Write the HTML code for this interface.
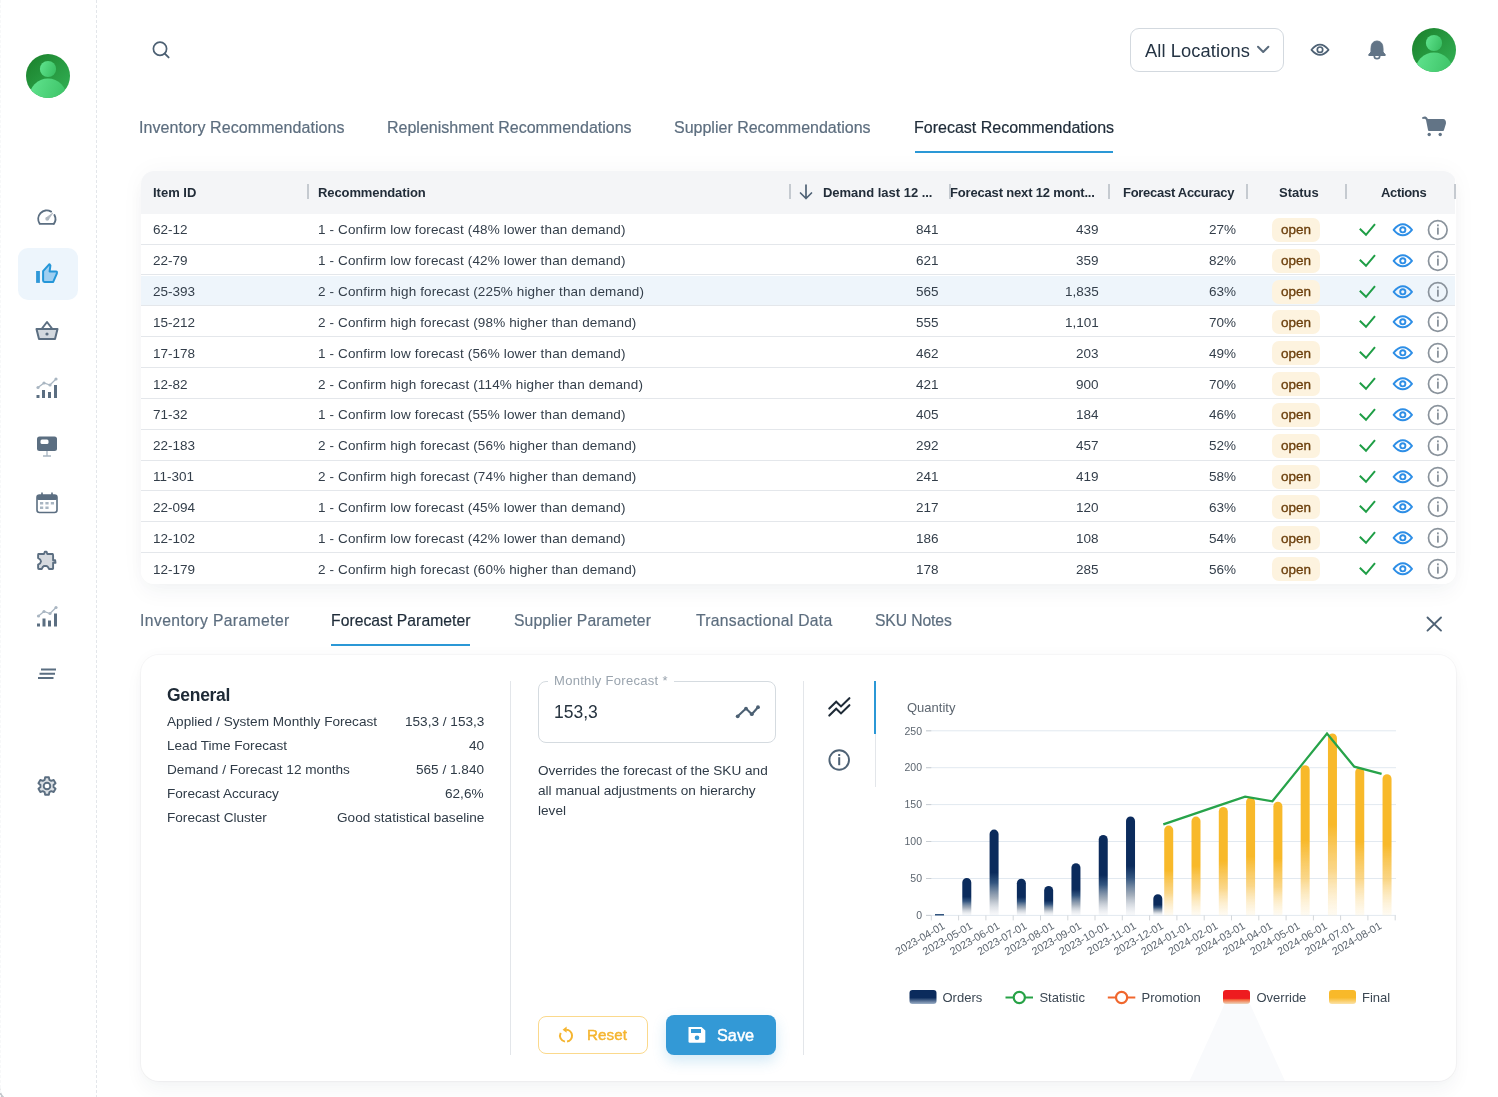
<!DOCTYPE html><html><head><meta charset="utf-8"><style>
*{box-sizing:border-box;margin:0;padding:0}
html,body{width:1498px;height:1097px;overflow:hidden;background:#fff;font-family:"Liberation Sans",sans-serif;color:#2c3946}
.abs{position:absolute}
.t{position:absolute;white-space:nowrap;line-height:1;will-change:transform}
svg{will-change:transform}
</style></head><body>

<svg class="abs" style="left:0;top:1085px" width="8" height="12" viewBox="0 1085 8 12"><path d="M0 1087 Q0.5 1094 4.2 1097 L0 1097 Z" fill="#c4c8cd"/></svg>
<div class="abs" style="left:96px;top:0;width:1px;height:1097px;background:repeating-linear-gradient(to bottom,#e3e6ea 0 3px,transparent 3px 5px)"></div>
<div class="abs" style="left:0;top:0;width:1px;height:1097px;background:repeating-linear-gradient(to bottom,#f7f8f9 0 3px,transparent 3px 5px)"></div>
<svg class="abs" style="left:26px;top:54px" width="44" height="44" viewBox="0 0 44 44">
<defs><clipPath id="avc26"><circle cx="22" cy="22" r="22"/></clipPath>
<linearGradient id="avg26" x1="0" y1="0" x2="1" y2="1"><stop offset="0" stop-color="#1a7f2a"/><stop offset="1" stop-color="#34b457"/></linearGradient>
<linearGradient id="avh26" x1="0" y1="0" x2="1" y2="0.4"><stop offset="0" stop-color="#62e590"/><stop offset="1" stop-color="#3cc266"/></linearGradient></defs>
<g clip-path="url(#avc26)"><rect width="44" height="44" fill="url(#avg26)"/>
<circle cx="22" cy="15" r="8.1" fill="url(#avh26)"/>
<ellipse cx="22" cy="44" rx="19" ry="19.5" fill="url(#avh26)"/></g></svg>
<div class="abs" style="left:18px;top:248px;width:60px;height:52px;border-radius:10px;background:#edf5fc"></div>
<svg class="abs" style="left:0;top:0" width="96" height="820" viewBox="0 0 96 820">
<path d="M53.84 223.9 L39.76 223.9 A8.6 8.6 0 0 1 51.1 211.55 M54.4 214.97 A8.6 8.6 0 0 1 53.84 223.9" fill="none" stroke="#5b6e81" stroke-width="1.9" stroke-linecap="round" stroke-linejoin="round"/>
<path d="M46.2 217.8 L52.8 213 L48.2 219.8 Z" fill="#b0b8c0" stroke="#b0b8c0" stroke-width="0.8" stroke-linejoin="round"/><circle cx="47.2" cy="218.8" r="1.9" fill="#b0b8c0"/>
<g>
<rect x="36.1" y="271" width="3.8" height="11.9" fill="#2f98d8"/>
<path d="M43.1 271.2 L49.4 264.2 L50.4 265.6 L49.6 271.4 L56 271.4 Q57.2 271.5 56.9 273 L56.6 274.2 L53.2 281.9 L44.5 281.9 Q43.1 281.9 43.1 280.5 Z" fill="#9fcff1" stroke="#2496d8" stroke-width="2" stroke-linejoin="round"/>
</g>
<g stroke="#5b6e81" stroke-width="2" fill="none" stroke-linejoin="round">
<path d="M36.5 329 L57.5 329 L55 339 L39 339 Z" fill="#d3d9df"/>
<path d="M42 328.5 L47 322 L52 328.5"/>
</g>
<circle cx="47" cy="334" r="1.6" fill="#5b6e81"/>
<g fill="#5b6e81">
<rect x="36.5" y="395" width="3" height="3"/><rect x="42" y="390" width="3" height="8"/><rect x="48" y="392" width="3" height="6"/><rect x="54" y="385" width="3" height="13"/>
</g>
<path d="M38 387.5 L44 383 L50 385 L56 379" stroke="#a9b6c2" stroke-width="1.3" fill="none"/>
<g fill="#a9b6c2"><circle cx="38" cy="387.5" r="1.6"/><circle cx="44" cy="383" r="1.6"/><circle cx="50" cy="385" r="1.6"/><circle cx="56" cy="379" r="1.6"/></g>
<rect x="37" y="436.5" width="20" height="14.5" rx="2.5" fill="#5b6e81"/>
<rect x="40.5" y="439.5" width="8" height="4.5" rx="1.5" fill="#fff"/>
<path d="M47 451 L47 455.5 M43 456 L51 456" stroke="#a9b6c2" stroke-width="1.3"/>
<rect x="37" y="495" width="20" height="17.5" rx="2.5" fill="#fff" stroke="#5b6e81" stroke-width="1.6"/>
<rect x="37" y="495" width="20" height="5" rx="1.5" fill="#5b6e81"/>
<path d="M42 492.5 L42 496 M52 492.5 L52 496" stroke="#5b6e81" stroke-width="1.6"/>
<g fill="#a9b6c2"><rect x="40" y="502" width="3.2" height="2.5"/><rect x="45.4" y="502" width="3.2" height="2.5"/><rect x="50.8" y="502" width="3.2" height="2.5"/><rect x="40" y="506.5" width="3.2" height="2.5"/><rect x="45.4" y="506.5" width="3.2" height="2.5"/></g>
<path d="M38.3 554 L44 554 L44.9 551.6 L46.5 551.6 L47.3 554 L52.8 554 Q53.1 554.2 53.1 556 L53.1 560.3 L55.2 560.3 L55.5 562.8 L53.1 562.8 L53.1 568.5 Q53.1 569 52.5 569 L49 569 Q47.8 566 46.2 566 L44 566 Q42.6 566.5 41.8 569 L38.9 569 Q38.1 569 38.1 568 L38.1 564.7 Q40.8 563.5 41 561.4 Q40.8 559.2 38.1 558.1 L38.1 555 Q38.1 554 38.3 554 Z" fill="#d6dadf" stroke="#5b6e81" stroke-width="1.9" stroke-linejoin="round"/>
<g fill="#5b6e81">
<rect x="37" y="623.5" width="3" height="3"/><rect x="42.5" y="618.5" width="3" height="8"/><rect x="48" y="620.5" width="3" height="6"/><rect x="54" y="613.5" width="3" height="13"/>
</g>
<path d="M38.5 616 L44 611.5 L50 613.5 L56 607.5" stroke="#a9b6c2" stroke-width="1.3" fill="none"/>
<g fill="#a9b6c2"><circle cx="38.5" cy="616" r="1.6"/><circle cx="44" cy="611.5" r="1.6"/><circle cx="50" cy="613.5" r="1.6"/><circle cx="56" cy="607.5" r="1.6"/></g>
<path d="M41 669.5 L56 669.5 M39.5 673.8 L55 673.8 M38 678 L53.5 678" stroke="#5b6e81" stroke-width="1.9"/>
</svg>
<svg class="abs" style="left:30px;top:770px" width="34" height="32" viewBox="30 770 34 32"><path d="M43.70 780.28 L44.63 779.84 L45.13 777.20 L48.87 777.20 L49.37 779.84 L50.30 780.28 L51.15 780.87 L53.69 779.98 L55.56 783.22 L53.52 784.97 L53.60 786.00 L53.52 787.03 L55.56 788.78 L53.69 792.02 L51.15 791.13 L50.30 791.72 L49.37 792.16 L48.87 794.80 L45.13 794.80 L44.63 792.16 L43.70 791.72 L42.85 791.13 L40.31 792.02 L38.44 788.78 L40.48 787.03 L40.40 786.00 L40.48 784.97 L38.44 783.22 L40.31 779.98 L42.85 780.87 Z" fill="#dde1e5" stroke="#5b6e81" stroke-width="1.9" stroke-linejoin="round"/><circle cx="47" cy="786" r="3.3" fill="#fff" stroke="#5b6e81" stroke-width="1.9"/></svg>
<svg class="abs" style="left:150px;top:38px" width="24" height="24" viewBox="150 38 24 24"><circle cx="160" cy="48.8" r="6.6" fill="none" stroke="#4c6073" stroke-width="1.7"/><path d="M164.8 53.6 L168.6 57.4" stroke="#4c6073" stroke-width="1.9" stroke-linecap="round"/></svg>
<div class="abs" style="left:1130px;top:28px;width:154px;height:44px;border:1px solid #d3d9df;border-radius:9px"></div>
<div class="t" style="left:1145px;top:41.5px;font-size:18.3px;color:#253444;letter-spacing:0.1px">All Locations</div>
<svg class="abs" style="left:1250px;top:38px" width="24" height="24" viewBox="1250 38 24 24"><path d="M1258 46.8 L1263.2 52 L1268.4 46.8" fill="none" stroke="#5a6b7c" stroke-width="2" stroke-linecap="round" stroke-linejoin="round"/></svg>
<svg class="abs" style="left:1305px;top:35px" width="30" height="30" viewBox="1305 35 30 30"><path d="M1311.5 49.8 Q1320 39.5 1328.5 49.8 Q1320 60 1311.5 49.8 Z" fill="none" stroke="#4e6275" stroke-width="1.8" stroke-linejoin="round"/><circle cx="1320" cy="49.7" r="2.7" fill="none" stroke="#4e6275" stroke-width="1.7"/></svg>
<svg class="abs" style="left:1365px;top:38px" width="24" height="24" viewBox="1365 38 24 24"><path d="M1371 49 Q1371 41 1377 41 Q1383 41 1383 49 L1383 52 L1385.2 54.5 L1385.2 55.5 L1368.8 55.5 L1368.8 54.5 L1371 52 Z" fill="#627486" stroke="#627486" stroke-width="1" stroke-linejoin="round"/><path d="M1374.3 56 A2.7 2.7 0 0 0 1379.7 56" fill="none" stroke="#627486" stroke-width="1.7"/></svg>
<svg class="abs" style="left:1412px;top:28px" width="44" height="44" viewBox="0 0 44 44">
<defs><clipPath id="avc1412"><circle cx="22" cy="22" r="22"/></clipPath>
<linearGradient id="avg1412" x1="0" y1="0" x2="1" y2="1"><stop offset="0" stop-color="#1a7f2a"/><stop offset="1" stop-color="#34b457"/></linearGradient>
<linearGradient id="avh1412" x1="0" y1="0" x2="1" y2="0.4"><stop offset="0" stop-color="#62e590"/><stop offset="1" stop-color="#3cc266"/></linearGradient></defs>
<g clip-path="url(#avc1412)"><rect width="44" height="44" fill="url(#avg1412)"/>
<circle cx="22" cy="15" r="8.1" fill="url(#avh1412)"/>
<ellipse cx="22" cy="44" rx="19" ry="19.5" fill="url(#avh1412)"/></g></svg>
<div class="t" style="left:139px;top:119.5px;font-size:16px;color:#5d6e7f;letter-spacing:0.08px;-webkit-text-stroke:0.2px #5d6e7f">Inventory Recommendations</div>
<div class="t" style="left:386.5px;top:119.5px;font-size:16px;color:#5d6e7f;letter-spacing:0px;-webkit-text-stroke:0.2px #5d6e7f">Replenishment Recommendations</div>
<div class="t" style="left:673.5px;top:119.5px;font-size:16px;color:#5d6e7f;letter-spacing:0px;-webkit-text-stroke:0.2px #5d6e7f">Supplier Recommendations</div>
<div class="t" style="left:914px;top:119.5px;font-size:16px;color:#1e2b38;letter-spacing:0px;-webkit-text-stroke:0.2px #1e2b38">Forecast Recommendations</div>
<div class="abs" style="left:915px;top:151px;width:198px;height:2px;background:#2b98d6"></div>
<svg class="abs" style="left:1418px;top:112px" width="30" height="28" viewBox="1418 112 30 28"><path d="M1423 118 Q1425.5 116.3 1426.8 119 L1429 130 L1443 130 L1445 123.5 Q1445.3 120 1443 120 L1427 120" fill="#627486" stroke="#627486" stroke-width="1.9" stroke-linejoin="round" stroke-linecap="round"/><circle cx="1429.2" cy="134.5" r="1.7" fill="#627486"/><circle cx="1440.2" cy="134.5" r="1.7" fill="#627486"/></svg>
<div class="abs" style="left:141px;top:171px;width:1315px;height:413px;border-radius:13px;background:#fff;box-shadow:0 10px 20px rgba(30,50,80,0.04),0 0 24px rgba(30,50,80,0.035);overflow:hidden">
<div class="abs" style="left:0;top:0;width:1314px;height:42.8px;background:#f4f5f7"></div>
<div class="t" style="left:12px;top:15px;font-size:13px;font-weight:700;color:#222d39;letter-spacing:0px">Item ID</div>
<div class="t" style="left:176.5px;top:15px;font-size:13px;font-weight:700;color:#222d39;letter-spacing:-0.1px">Recommendation</div>
<div class="t" style="left:682px;top:15px;font-size:13px;font-weight:700;color:#222d39;letter-spacing:-0.02px">Demand last 12 ...</div>
<div class="t" style="left:808.5px;top:15px;font-size:13px;font-weight:700;color:#222d39;letter-spacing:-0.17px">Forecast next 12 mont...</div>
<div class="t" style="left:982.2px;top:15px;font-size:13px;font-weight:700;color:#222d39;letter-spacing:-0.28px">Forecast Accuracy</div>
<div class="t" style="left:1137.8px;top:15px;font-size:13px;font-weight:700;color:#222d39;letter-spacing:0px">Status</div>
<div class="t" style="left:1239.8px;top:15px;font-size:13px;font-weight:700;color:#222d39;letter-spacing:-0.33px">Actions</div>
<div class="abs" style="left:165.5px;top:13px;width:2px;height:15px;background:#c5cad0"></div>
<div class="abs" style="left:647.5px;top:13px;width:2px;height:15px;background:#c5cad0"></div>
<div class="abs" style="left:807.5px;top:13px;width:2px;height:15px;background:#c5cad0"></div>
<div class="abs" style="left:966.5px;top:13px;width:2px;height:15px;background:#c5cad0"></div>
<div class="abs" style="left:1104.5px;top:13px;width:2px;height:15px;background:#c5cad0"></div>
<div class="abs" style="left:1203.5px;top:13px;width:2px;height:15px;background:#c5cad0"></div>
<div class="abs" style="left:1312.5px;top:13px;width:2px;height:15px;background:#c5cad0"></div>
<svg class="abs" style="left:656px;top:12px" width="18" height="18" viewBox="0 0 18 18"><path d="M9 2 L9 15.5 M3.5 10 L9 15.5 L14.5 10" fill="none" stroke="#4f6275" stroke-width="1.7" stroke-linecap="round" stroke-linejoin="round"/></svg>
<div class="abs" style="left:0;top:42.80px;width:1314px;height:30.85px;background:#fff;border-bottom:1px solid #e4e7eb">
<div class="t" style="left:12px;top:9.5px;font-size:13.5px;color:#333e4a">62-12</div>
<div class="t" style="left:177px;top:9.5px;font-size:13.5px;color:#333e4a;letter-spacing:0.14px">1 - Confirm low forecast (48% lower than demand)</div>
<div class="t" style="right:516.5px;top:9.5px;font-size:13.5px;color:#333e4a">841</div>
<div class="t" style="right:356px;top:9.5px;font-size:13.5px;color:#333e4a">439</div>
<div class="t" style="right:219px;top:9.5px;font-size:13.5px;color:#333e4a">27%</div>
<div class="abs" style="left:1131px;top:4px;width:48px;height:24px;border-radius:7px;background:#fdf3df"></div>
<div class="t" style="left:1139.5px;top:9.5px;font-size:13.5px;color:#6b3f0c;-webkit-text-stroke:0.35px #6b3f0c">open</div>
<svg class="abs" style="left:1210px;top:4px" width="110" height="24" viewBox="1210 4 110 24"><path d="M1218.8 14.8 L1225 20.8 L1234 10.2" fill="none" stroke="#1f9e46" stroke-width="2"/><path d="M1252.6 15.8 Q1261.8 4.8 1271 15.8 Q1261.8 26.8 1252.6 15.8 Z" fill="none" stroke="#2d8ee6" stroke-width="1.9" stroke-linejoin="round"/><circle cx="1261.8" cy="15.8" r="2.6" fill="none" stroke="#2d8ee6" stroke-width="1.9"/><circle cx="1296.8" cy="16" r="9.3" fill="none" stroke="#8a939c" stroke-width="1.7"/><rect x="1296" y="13.6" width="1.8" height="7" fill="#8a939c"/><rect x="1296" y="10.4" width="1.8" height="1.9" fill="#8a939c"/></svg>
</div>
<div class="abs" style="left:0;top:73.65px;width:1314px;height:30.85px;background:#fff;border-bottom:1px solid #e4e7eb">
<div class="t" style="left:12px;top:9.5px;font-size:13.5px;color:#333e4a">22-79</div>
<div class="t" style="left:177px;top:9.5px;font-size:13.5px;color:#333e4a;letter-spacing:0.14px">1 - Confirm low forecast (42% lower than demand)</div>
<div class="t" style="right:516.5px;top:9.5px;font-size:13.5px;color:#333e4a">621</div>
<div class="t" style="right:356px;top:9.5px;font-size:13.5px;color:#333e4a">359</div>
<div class="t" style="right:219px;top:9.5px;font-size:13.5px;color:#333e4a">82%</div>
<div class="abs" style="left:1131px;top:4px;width:48px;height:24px;border-radius:7px;background:#fdf3df"></div>
<div class="t" style="left:1139.5px;top:9.5px;font-size:13.5px;color:#6b3f0c;-webkit-text-stroke:0.35px #6b3f0c">open</div>
<svg class="abs" style="left:1210px;top:4px" width="110" height="24" viewBox="1210 4 110 24"><path d="M1218.8 14.8 L1225 20.8 L1234 10.2" fill="none" stroke="#1f9e46" stroke-width="2"/><path d="M1252.6 15.8 Q1261.8 4.8 1271 15.8 Q1261.8 26.8 1252.6 15.8 Z" fill="none" stroke="#2d8ee6" stroke-width="1.9" stroke-linejoin="round"/><circle cx="1261.8" cy="15.8" r="2.6" fill="none" stroke="#2d8ee6" stroke-width="1.9"/><circle cx="1296.8" cy="16" r="9.3" fill="none" stroke="#8a939c" stroke-width="1.7"/><rect x="1296" y="13.6" width="1.8" height="7" fill="#8a939c"/><rect x="1296" y="10.4" width="1.8" height="1.9" fill="#8a939c"/></svg>
</div>
<div class="abs" style="left:0;top:104.50px;width:1314px;height:30.85px;background:#eef5fb;border-bottom:1px solid #e4e7eb">
<div class="t" style="left:12px;top:9.5px;font-size:13.5px;color:#333e4a">25-393</div>
<div class="t" style="left:177px;top:9.5px;font-size:13.5px;color:#333e4a;letter-spacing:0.14px">2 - Confirm high forecast (225% higher than demand)</div>
<div class="t" style="right:516.5px;top:9.5px;font-size:13.5px;color:#333e4a">565</div>
<div class="t" style="right:356px;top:9.5px;font-size:13.5px;color:#333e4a">1,835</div>
<div class="t" style="right:219px;top:9.5px;font-size:13.5px;color:#333e4a">63%</div>
<div class="abs" style="left:1131px;top:4px;width:48px;height:24px;border-radius:7px;background:#fdf3df"></div>
<div class="t" style="left:1139.5px;top:9.5px;font-size:13.5px;color:#6b3f0c;-webkit-text-stroke:0.35px #6b3f0c">open</div>
<svg class="abs" style="left:1210px;top:4px" width="110" height="24" viewBox="1210 4 110 24"><path d="M1218.8 14.8 L1225 20.8 L1234 10.2" fill="none" stroke="#1f9e46" stroke-width="2"/><path d="M1252.6 15.8 Q1261.8 4.8 1271 15.8 Q1261.8 26.8 1252.6 15.8 Z" fill="none" stroke="#2d8ee6" stroke-width="1.9" stroke-linejoin="round"/><circle cx="1261.8" cy="15.8" r="2.6" fill="none" stroke="#2d8ee6" stroke-width="1.9"/><circle cx="1296.8" cy="16" r="9.3" fill="none" stroke="#8a939c" stroke-width="1.7"/><rect x="1296" y="13.6" width="1.8" height="7" fill="#8a939c"/><rect x="1296" y="10.4" width="1.8" height="1.9" fill="#8a939c"/></svg>
</div>
<div class="abs" style="left:0;top:135.35px;width:1314px;height:30.85px;background:#fff;border-bottom:1px solid #e4e7eb">
<div class="t" style="left:12px;top:9.5px;font-size:13.5px;color:#333e4a">15-212</div>
<div class="t" style="left:177px;top:9.5px;font-size:13.5px;color:#333e4a;letter-spacing:0.14px">2 - Confirm high forecast (98% higher than demand)</div>
<div class="t" style="right:516.5px;top:9.5px;font-size:13.5px;color:#333e4a">555</div>
<div class="t" style="right:356px;top:9.5px;font-size:13.5px;color:#333e4a">1,101</div>
<div class="t" style="right:219px;top:9.5px;font-size:13.5px;color:#333e4a">70%</div>
<div class="abs" style="left:1131px;top:4px;width:48px;height:24px;border-radius:7px;background:#fdf3df"></div>
<div class="t" style="left:1139.5px;top:9.5px;font-size:13.5px;color:#6b3f0c;-webkit-text-stroke:0.35px #6b3f0c">open</div>
<svg class="abs" style="left:1210px;top:4px" width="110" height="24" viewBox="1210 4 110 24"><path d="M1218.8 14.8 L1225 20.8 L1234 10.2" fill="none" stroke="#1f9e46" stroke-width="2"/><path d="M1252.6 15.8 Q1261.8 4.8 1271 15.8 Q1261.8 26.8 1252.6 15.8 Z" fill="none" stroke="#2d8ee6" stroke-width="1.9" stroke-linejoin="round"/><circle cx="1261.8" cy="15.8" r="2.6" fill="none" stroke="#2d8ee6" stroke-width="1.9"/><circle cx="1296.8" cy="16" r="9.3" fill="none" stroke="#8a939c" stroke-width="1.7"/><rect x="1296" y="13.6" width="1.8" height="7" fill="#8a939c"/><rect x="1296" y="10.4" width="1.8" height="1.9" fill="#8a939c"/></svg>
</div>
<div class="abs" style="left:0;top:166.20px;width:1314px;height:30.85px;background:#fff;border-bottom:1px solid #e4e7eb">
<div class="t" style="left:12px;top:9.5px;font-size:13.5px;color:#333e4a">17-178</div>
<div class="t" style="left:177px;top:9.5px;font-size:13.5px;color:#333e4a;letter-spacing:0.14px">1 - Confirm low forecast (56% lower than demand)</div>
<div class="t" style="right:516.5px;top:9.5px;font-size:13.5px;color:#333e4a">462</div>
<div class="t" style="right:356px;top:9.5px;font-size:13.5px;color:#333e4a">203</div>
<div class="t" style="right:219px;top:9.5px;font-size:13.5px;color:#333e4a">49%</div>
<div class="abs" style="left:1131px;top:4px;width:48px;height:24px;border-radius:7px;background:#fdf3df"></div>
<div class="t" style="left:1139.5px;top:9.5px;font-size:13.5px;color:#6b3f0c;-webkit-text-stroke:0.35px #6b3f0c">open</div>
<svg class="abs" style="left:1210px;top:4px" width="110" height="24" viewBox="1210 4 110 24"><path d="M1218.8 14.8 L1225 20.8 L1234 10.2" fill="none" stroke="#1f9e46" stroke-width="2"/><path d="M1252.6 15.8 Q1261.8 4.8 1271 15.8 Q1261.8 26.8 1252.6 15.8 Z" fill="none" stroke="#2d8ee6" stroke-width="1.9" stroke-linejoin="round"/><circle cx="1261.8" cy="15.8" r="2.6" fill="none" stroke="#2d8ee6" stroke-width="1.9"/><circle cx="1296.8" cy="16" r="9.3" fill="none" stroke="#8a939c" stroke-width="1.7"/><rect x="1296" y="13.6" width="1.8" height="7" fill="#8a939c"/><rect x="1296" y="10.4" width="1.8" height="1.9" fill="#8a939c"/></svg>
</div>
<div class="abs" style="left:0;top:197.05px;width:1314px;height:30.85px;background:#fff;border-bottom:1px solid #e4e7eb">
<div class="t" style="left:12px;top:9.5px;font-size:13.5px;color:#333e4a">12-82</div>
<div class="t" style="left:177px;top:9.5px;font-size:13.5px;color:#333e4a;letter-spacing:0.14px">2 - Confirm high forecast (114% higher than demand)</div>
<div class="t" style="right:516.5px;top:9.5px;font-size:13.5px;color:#333e4a">421</div>
<div class="t" style="right:356px;top:9.5px;font-size:13.5px;color:#333e4a">900</div>
<div class="t" style="right:219px;top:9.5px;font-size:13.5px;color:#333e4a">70%</div>
<div class="abs" style="left:1131px;top:4px;width:48px;height:24px;border-radius:7px;background:#fdf3df"></div>
<div class="t" style="left:1139.5px;top:9.5px;font-size:13.5px;color:#6b3f0c;-webkit-text-stroke:0.35px #6b3f0c">open</div>
<svg class="abs" style="left:1210px;top:4px" width="110" height="24" viewBox="1210 4 110 24"><path d="M1218.8 14.8 L1225 20.8 L1234 10.2" fill="none" stroke="#1f9e46" stroke-width="2"/><path d="M1252.6 15.8 Q1261.8 4.8 1271 15.8 Q1261.8 26.8 1252.6 15.8 Z" fill="none" stroke="#2d8ee6" stroke-width="1.9" stroke-linejoin="round"/><circle cx="1261.8" cy="15.8" r="2.6" fill="none" stroke="#2d8ee6" stroke-width="1.9"/><circle cx="1296.8" cy="16" r="9.3" fill="none" stroke="#8a939c" stroke-width="1.7"/><rect x="1296" y="13.6" width="1.8" height="7" fill="#8a939c"/><rect x="1296" y="10.4" width="1.8" height="1.9" fill="#8a939c"/></svg>
</div>
<div class="abs" style="left:0;top:227.90px;width:1314px;height:30.85px;background:#fff;border-bottom:1px solid #e4e7eb">
<div class="t" style="left:12px;top:9.5px;font-size:13.5px;color:#333e4a">71-32</div>
<div class="t" style="left:177px;top:9.5px;font-size:13.5px;color:#333e4a;letter-spacing:0.14px">1 - Confirm low forecast (55% lower than demand)</div>
<div class="t" style="right:516.5px;top:9.5px;font-size:13.5px;color:#333e4a">405</div>
<div class="t" style="right:356px;top:9.5px;font-size:13.5px;color:#333e4a">184</div>
<div class="t" style="right:219px;top:9.5px;font-size:13.5px;color:#333e4a">46%</div>
<div class="abs" style="left:1131px;top:4px;width:48px;height:24px;border-radius:7px;background:#fdf3df"></div>
<div class="t" style="left:1139.5px;top:9.5px;font-size:13.5px;color:#6b3f0c;-webkit-text-stroke:0.35px #6b3f0c">open</div>
<svg class="abs" style="left:1210px;top:4px" width="110" height="24" viewBox="1210 4 110 24"><path d="M1218.8 14.8 L1225 20.8 L1234 10.2" fill="none" stroke="#1f9e46" stroke-width="2"/><path d="M1252.6 15.8 Q1261.8 4.8 1271 15.8 Q1261.8 26.8 1252.6 15.8 Z" fill="none" stroke="#2d8ee6" stroke-width="1.9" stroke-linejoin="round"/><circle cx="1261.8" cy="15.8" r="2.6" fill="none" stroke="#2d8ee6" stroke-width="1.9"/><circle cx="1296.8" cy="16" r="9.3" fill="none" stroke="#8a939c" stroke-width="1.7"/><rect x="1296" y="13.6" width="1.8" height="7" fill="#8a939c"/><rect x="1296" y="10.4" width="1.8" height="1.9" fill="#8a939c"/></svg>
</div>
<div class="abs" style="left:0;top:258.75px;width:1314px;height:30.85px;background:#fff;border-bottom:1px solid #e4e7eb">
<div class="t" style="left:12px;top:9.5px;font-size:13.5px;color:#333e4a">22-183</div>
<div class="t" style="left:177px;top:9.5px;font-size:13.5px;color:#333e4a;letter-spacing:0.14px">2 - Confirm high forecast (56% higher than demand)</div>
<div class="t" style="right:516.5px;top:9.5px;font-size:13.5px;color:#333e4a">292</div>
<div class="t" style="right:356px;top:9.5px;font-size:13.5px;color:#333e4a">457</div>
<div class="t" style="right:219px;top:9.5px;font-size:13.5px;color:#333e4a">52%</div>
<div class="abs" style="left:1131px;top:4px;width:48px;height:24px;border-radius:7px;background:#fdf3df"></div>
<div class="t" style="left:1139.5px;top:9.5px;font-size:13.5px;color:#6b3f0c;-webkit-text-stroke:0.35px #6b3f0c">open</div>
<svg class="abs" style="left:1210px;top:4px" width="110" height="24" viewBox="1210 4 110 24"><path d="M1218.8 14.8 L1225 20.8 L1234 10.2" fill="none" stroke="#1f9e46" stroke-width="2"/><path d="M1252.6 15.8 Q1261.8 4.8 1271 15.8 Q1261.8 26.8 1252.6 15.8 Z" fill="none" stroke="#2d8ee6" stroke-width="1.9" stroke-linejoin="round"/><circle cx="1261.8" cy="15.8" r="2.6" fill="none" stroke="#2d8ee6" stroke-width="1.9"/><circle cx="1296.8" cy="16" r="9.3" fill="none" stroke="#8a939c" stroke-width="1.7"/><rect x="1296" y="13.6" width="1.8" height="7" fill="#8a939c"/><rect x="1296" y="10.4" width="1.8" height="1.9" fill="#8a939c"/></svg>
</div>
<div class="abs" style="left:0;top:289.60px;width:1314px;height:30.85px;background:#fff;border-bottom:1px solid #e4e7eb">
<div class="t" style="left:12px;top:9.5px;font-size:13.5px;color:#333e4a">11-301</div>
<div class="t" style="left:177px;top:9.5px;font-size:13.5px;color:#333e4a;letter-spacing:0.14px">2 - Confirm high forecast (74% higher than demand)</div>
<div class="t" style="right:516.5px;top:9.5px;font-size:13.5px;color:#333e4a">241</div>
<div class="t" style="right:356px;top:9.5px;font-size:13.5px;color:#333e4a">419</div>
<div class="t" style="right:219px;top:9.5px;font-size:13.5px;color:#333e4a">58%</div>
<div class="abs" style="left:1131px;top:4px;width:48px;height:24px;border-radius:7px;background:#fdf3df"></div>
<div class="t" style="left:1139.5px;top:9.5px;font-size:13.5px;color:#6b3f0c;-webkit-text-stroke:0.35px #6b3f0c">open</div>
<svg class="abs" style="left:1210px;top:4px" width="110" height="24" viewBox="1210 4 110 24"><path d="M1218.8 14.8 L1225 20.8 L1234 10.2" fill="none" stroke="#1f9e46" stroke-width="2"/><path d="M1252.6 15.8 Q1261.8 4.8 1271 15.8 Q1261.8 26.8 1252.6 15.8 Z" fill="none" stroke="#2d8ee6" stroke-width="1.9" stroke-linejoin="round"/><circle cx="1261.8" cy="15.8" r="2.6" fill="none" stroke="#2d8ee6" stroke-width="1.9"/><circle cx="1296.8" cy="16" r="9.3" fill="none" stroke="#8a939c" stroke-width="1.7"/><rect x="1296" y="13.6" width="1.8" height="7" fill="#8a939c"/><rect x="1296" y="10.4" width="1.8" height="1.9" fill="#8a939c"/></svg>
</div>
<div class="abs" style="left:0;top:320.45px;width:1314px;height:30.85px;background:#fff;border-bottom:1px solid #e4e7eb">
<div class="t" style="left:12px;top:9.5px;font-size:13.5px;color:#333e4a">22-094</div>
<div class="t" style="left:177px;top:9.5px;font-size:13.5px;color:#333e4a;letter-spacing:0.14px">1 - Confirm low forecast (45% lower than demand)</div>
<div class="t" style="right:516.5px;top:9.5px;font-size:13.5px;color:#333e4a">217</div>
<div class="t" style="right:356px;top:9.5px;font-size:13.5px;color:#333e4a">120</div>
<div class="t" style="right:219px;top:9.5px;font-size:13.5px;color:#333e4a">63%</div>
<div class="abs" style="left:1131px;top:4px;width:48px;height:24px;border-radius:7px;background:#fdf3df"></div>
<div class="t" style="left:1139.5px;top:9.5px;font-size:13.5px;color:#6b3f0c;-webkit-text-stroke:0.35px #6b3f0c">open</div>
<svg class="abs" style="left:1210px;top:4px" width="110" height="24" viewBox="1210 4 110 24"><path d="M1218.8 14.8 L1225 20.8 L1234 10.2" fill="none" stroke="#1f9e46" stroke-width="2"/><path d="M1252.6 15.8 Q1261.8 4.8 1271 15.8 Q1261.8 26.8 1252.6 15.8 Z" fill="none" stroke="#2d8ee6" stroke-width="1.9" stroke-linejoin="round"/><circle cx="1261.8" cy="15.8" r="2.6" fill="none" stroke="#2d8ee6" stroke-width="1.9"/><circle cx="1296.8" cy="16" r="9.3" fill="none" stroke="#8a939c" stroke-width="1.7"/><rect x="1296" y="13.6" width="1.8" height="7" fill="#8a939c"/><rect x="1296" y="10.4" width="1.8" height="1.9" fill="#8a939c"/></svg>
</div>
<div class="abs" style="left:0;top:351.30px;width:1314px;height:30.85px;background:#fff;border-bottom:1px solid #e4e7eb">
<div class="t" style="left:12px;top:9.5px;font-size:13.5px;color:#333e4a">12-102</div>
<div class="t" style="left:177px;top:9.5px;font-size:13.5px;color:#333e4a;letter-spacing:0.14px">1 - Confirm low forecast (42% lower than demand)</div>
<div class="t" style="right:516.5px;top:9.5px;font-size:13.5px;color:#333e4a">186</div>
<div class="t" style="right:356px;top:9.5px;font-size:13.5px;color:#333e4a">108</div>
<div class="t" style="right:219px;top:9.5px;font-size:13.5px;color:#333e4a">54%</div>
<div class="abs" style="left:1131px;top:4px;width:48px;height:24px;border-radius:7px;background:#fdf3df"></div>
<div class="t" style="left:1139.5px;top:9.5px;font-size:13.5px;color:#6b3f0c;-webkit-text-stroke:0.35px #6b3f0c">open</div>
<svg class="abs" style="left:1210px;top:4px" width="110" height="24" viewBox="1210 4 110 24"><path d="M1218.8 14.8 L1225 20.8 L1234 10.2" fill="none" stroke="#1f9e46" stroke-width="2"/><path d="M1252.6 15.8 Q1261.8 4.8 1271 15.8 Q1261.8 26.8 1252.6 15.8 Z" fill="none" stroke="#2d8ee6" stroke-width="1.9" stroke-linejoin="round"/><circle cx="1261.8" cy="15.8" r="2.6" fill="none" stroke="#2d8ee6" stroke-width="1.9"/><circle cx="1296.8" cy="16" r="9.3" fill="none" stroke="#8a939c" stroke-width="1.7"/><rect x="1296" y="13.6" width="1.8" height="7" fill="#8a939c"/><rect x="1296" y="10.4" width="1.8" height="1.9" fill="#8a939c"/></svg>
</div>
<div class="abs" style="left:0;top:382.15px;width:1314px;height:30.85px;background:#fff;">
<div class="t" style="left:12px;top:9.5px;font-size:13.5px;color:#333e4a">12-179</div>
<div class="t" style="left:177px;top:9.5px;font-size:13.5px;color:#333e4a;letter-spacing:0.14px">2 - Confirm high forecast (60% higher than demand)</div>
<div class="t" style="right:516.5px;top:9.5px;font-size:13.5px;color:#333e4a">178</div>
<div class="t" style="right:356px;top:9.5px;font-size:13.5px;color:#333e4a">285</div>
<div class="t" style="right:219px;top:9.5px;font-size:13.5px;color:#333e4a">56%</div>
<div class="abs" style="left:1131px;top:4px;width:48px;height:24px;border-radius:7px;background:#fdf3df"></div>
<div class="t" style="left:1139.5px;top:9.5px;font-size:13.5px;color:#6b3f0c;-webkit-text-stroke:0.35px #6b3f0c">open</div>
<svg class="abs" style="left:1210px;top:4px" width="110" height="24" viewBox="1210 4 110 24"><path d="M1218.8 14.8 L1225 20.8 L1234 10.2" fill="none" stroke="#1f9e46" stroke-width="2"/><path d="M1252.6 15.8 Q1261.8 4.8 1271 15.8 Q1261.8 26.8 1252.6 15.8 Z" fill="none" stroke="#2d8ee6" stroke-width="1.9" stroke-linejoin="round"/><circle cx="1261.8" cy="15.8" r="2.6" fill="none" stroke="#2d8ee6" stroke-width="1.9"/><circle cx="1296.8" cy="16" r="9.3" fill="none" stroke="#8a939c" stroke-width="1.7"/><rect x="1296" y="13.6" width="1.8" height="7" fill="#8a939c"/><rect x="1296" y="10.4" width="1.8" height="1.9" fill="#8a939c"/></svg>
</div>
</div>
<div class="t" style="left:139.5px;top:613px;font-size:15.7px;color:#5d6e7f;letter-spacing:0.4px;-webkit-text-stroke:0.2px #5d6e7f">Inventory Parameter</div>
<div class="t" style="left:330.5px;top:613px;font-size:15.7px;color:#1e2b38;letter-spacing:0.05px;-webkit-text-stroke:0.2px #1e2b38">Forecast Parameter</div>
<div class="t" style="left:514px;top:613px;font-size:15.7px;color:#5d6e7f;letter-spacing:0.1px;-webkit-text-stroke:0.2px #5d6e7f">Supplier Parameter</div>
<div class="t" style="left:695.5px;top:613px;font-size:15.7px;color:#5d6e7f;letter-spacing:0.3px;-webkit-text-stroke:0.2px #5d6e7f">Transactional Data</div>
<div class="t" style="left:874.5px;top:613px;font-size:15.7px;color:#5d6e7f;letter-spacing:-0.1px;-webkit-text-stroke:0.2px #5d6e7f">SKU Notes</div>
<div class="abs" style="left:331px;top:644px;width:139px;height:2px;background:#2b98d6"></div>
<svg class="abs" style="left:1420px;top:610px" width="28" height="28" viewBox="1420 610 28 28"><path d="M1427.5 617.5 L1441 630.6 M1441 617.5 L1427.5 630.6" stroke="#4e6275" stroke-width="1.9" stroke-linecap="round"/></svg>
<div class="abs" style="left:141px;top:655px;width:1315px;height:426px;border-radius:18px;background:#fff;box-shadow:0 0 0 1px rgba(20,40,70,0.03),0 10px 18px rgba(30,50,80,0.045),0 0 14px rgba(30,50,80,0.03)"></div>
<div class="t" style="left:167px;top:687px;font-size:17.5px;font-weight:700;color:#1e2a36;letter-spacing:-0.3px">General</div>
<div class="t" style="left:167px;top:715px;font-size:13.6px;color:#2f3b47">Applied / System Monthly Forecast</div>
<div class="t" style="right:1014px;top:715px;font-size:13.6px;color:#2f3b47">153,3 / 153,3</div>
<div class="t" style="left:167px;top:739px;font-size:13.6px;color:#2f3b47">Lead Time Forecast</div>
<div class="t" style="right:1014px;top:739px;font-size:13.6px;color:#2f3b47">40</div>
<div class="t" style="left:167px;top:763px;font-size:13.6px;color:#2f3b47">Demand / Forecast 12 months</div>
<div class="t" style="right:1014px;top:763px;font-size:13.6px;color:#2f3b47">565 / 1.840</div>
<div class="t" style="left:167px;top:787px;font-size:13.6px;color:#2f3b47">Forecast Accuracy</div>
<div class="t" style="right:1014px;top:787px;font-size:13.6px;color:#2f3b47">62,6%</div>
<div class="t" style="left:167px;top:811px;font-size:13.6px;color:#2f3b47">Forecast Cluster</div>
<div class="t" style="right:1014px;top:811px;font-size:13.6px;color:#2f3b47">Good statistical baseline</div>
<div class="abs" style="left:510px;top:681px;width:1px;height:374px;background:#e3e6ea"></div>
<div class="abs" style="left:803px;top:681px;width:1px;height:374px;background:#e3e6ea"></div>
<div class="abs" style="left:538px;top:681px;width:238px;height:62px;border:1px solid #d5dbe0;border-radius:8px"></div>
<div class="abs" style="left:548px;top:674px;width:126px;height:12px;background:#fff"></div>
<div class="t" style="left:553.5px;top:674px;font-size:13px;color:#9aa4ae;letter-spacing:0.3px">Monthly Forecast *</div>
<div class="t" style="left:554px;top:704px;font-size:17.5px;color:#26333f">153,3</div>
<svg class="abs" style="left:730px;top:700px" width="36" height="24" viewBox="730 700 36 24"><path d="M737.7 716.3 L746 708.6 L751.8 714.2 L758 707.2" fill="none" stroke="#4c6073" stroke-width="2.1" stroke-linecap="round" stroke-linejoin="round"/><circle cx="737.7" cy="716.3" r="1.9" fill="#4c6073"/><circle cx="746" cy="708.6" r="1.9" fill="#4c6073"/><circle cx="751.8" cy="714.2" r="1.9" fill="#4c6073"/><circle cx="758" cy="707.2" r="1.9" fill="#4c6073"/></svg>
<div class="t" style="left:538px;top:764px;font-size:13.6px;color:#2f3b47">Overrides the forecast of the SKU and</div>
<div class="t" style="left:538px;top:784px;font-size:13.6px;color:#2f3b47">all manual adjustments on hierarchy</div>
<div class="t" style="left:538px;top:804px;font-size:13.6px;color:#2f3b47">level</div>
<div class="abs" style="left:538px;top:1016px;width:110px;height:38px;border:1px solid #fbd98c;border-radius:8px"></div>
<svg class="abs" style="left:554px;top:1024px" width="22" height="22" viewBox="554 1024 22 22"><path d="M566.21 1029.70 A6 6 0 0 1 567.04 1041.61 M564.96 1041.61 A6 6 0 0 1 560.70 1032.88" fill="none" stroke="#f5b530" stroke-width="2"/><path d="M562.6 1029.7 L566.6 1026.6 L566.6 1032.8 Z" fill="#f5b530"/></svg>
<div class="t" style="left:586.5px;top:1026.5px;font-size:15.2px;color:#f5b530;letter-spacing:0.1px;-webkit-text-stroke:0.45px #f5b530">Reset</div>
<div class="abs" style="left:666px;top:1015px;width:110px;height:40px;border-radius:8px;background:#3399d6;box-shadow:0 6px 14px rgba(51,153,214,0.22)"></div>
<svg class="abs" style="left:686px;top:1025px" width="22" height="20" viewBox="686 1025 22 20"><path d="M688.5 1027 L701.5 1027 L705.3 1030.5 L705.3 1041.5 Q705.3 1042.8 704 1042.8 L689.8 1042.8 Q688.5 1042.8 688.5 1041.5 Z" fill="#fff"/><rect x="691" y="1029" width="10" height="4" fill="#3399d6"/><circle cx="697" cy="1037.8" r="2.3" fill="#3399d6"/></svg>
<div class="t" style="left:716.5px;top:1027px;font-size:16.3px;color:#fff;-webkit-text-stroke:0.45px #fff">Save</div>
<svg class="abs" style="left:820px;top:690px" width="40" height="90" viewBox="820 690 40 90"><path d="M829.3 708.6 L836.2 701.8 L841 706.4 L849.4 698.2 M829.3 715.6 L836.2 708.8 L841 713.4 L849.4 705.2" fill="none" stroke="#1f2b37" stroke-width="2.1" stroke-linecap="round" stroke-linejoin="miter"/><circle cx="839.2" cy="760" r="9.8" fill="none" stroke="#4e6275" stroke-width="1.9"/><rect x="838.2" y="757.2" width="2" height="8" fill="#4e6275"/><rect x="838.2" y="754" width="2" height="2" fill="#4e6275"/></svg>
<div class="abs" style="left:874px;top:681px;width:2px;height:53px;background:#2b98d6"></div>
<div class="abs" style="left:875px;top:734px;width:1px;height:53px;background:#e3e6ea"></div>
<svg class="abs" style="left:1180px;top:1000px" width="110" height="82" viewBox="1180 1000 110 82"><path d="M1224.6 1004 L1250 1004 L1285 1081 L1189.5 1081 Z" fill="#f9fafc"/></svg>
<svg class="abs" style="left:880px;top:690px" width="560" height="330" viewBox="880 690 560 330">
<defs>
<linearGradient id="gnav" x1="0" y1="0" x2="0" y2="1"><stop offset="0" stop-color="#0b2b5c"/><stop offset="0.5" stop-color="#0b2b5c"/><stop offset="0.62" stop-color="#33557f"/><stop offset="0.8" stop-color="#8f9cac" stop-opacity="0.8"/><stop offset="1" stop-color="#dfe3ea" stop-opacity="0.2"/></linearGradient>
<linearGradient id="gor" x1="0" y1="0" x2="0" y2="1"><stop offset="0" stop-color="#f8b92a"/><stop offset="0.5" stop-color="#f8b92a"/><stop offset="0.75" stop-color="#f9cc6a" stop-opacity="0.8"/><stop offset="1" stop-color="#fdf0d2" stop-opacity="0.3"/></linearGradient>
<linearGradient id="lnav" x1="0" y1="0" x2="0" y2="1"><stop offset="0" stop-color="#0b2b5c"/><stop offset="0.55" stop-color="#0b2b5c"/><stop offset="1" stop-color="#9fb2c9"/></linearGradient>
<linearGradient id="lred" x1="0" y1="0" x2="0" y2="1"><stop offset="0" stop-color="#ee1b1f"/><stop offset="0.6" stop-color="#ee1b1f"/><stop offset="0.7" stop-color="#f46a3c"/><stop offset="1" stop-color="#ecd6be"/></linearGradient>
<linearGradient id="lor" x1="0" y1="0" x2="0" y2="1"><stop offset="0" stop-color="#f8b92a"/><stop offset="0.55" stop-color="#f8b92a"/><stop offset="1" stop-color="#fbe2a8"/></linearGradient>
</defs>
<text x="907" y="712" font-size="13" fill="#5d6670" font-family="Liberation Sans">Quantity</text>
<line x1="926" y1="915.4" x2="1396" y2="915.4" stroke="#e2e9f0" stroke-width="1"/>
<line x1="926" y1="915.4" x2="931.3" y2="915.4" stroke="#c9ced3" stroke-width="1"/>
<text x="922" y="919.1" font-size="10.5" fill="#5d6670" text-anchor="end" font-family="Liberation Sans">0</text>
<line x1="926" y1="878.5" x2="1396" y2="878.5" stroke="#e2e9f0" stroke-width="1"/>
<line x1="926" y1="878.5" x2="931.3" y2="878.5" stroke="#c9ced3" stroke-width="1"/>
<text x="922" y="882.2" font-size="10.5" fill="#5d6670" text-anchor="end" font-family="Liberation Sans">50</text>
<line x1="926" y1="841.5" x2="1396" y2="841.5" stroke="#e2e9f0" stroke-width="1"/>
<line x1="926" y1="841.5" x2="931.3" y2="841.5" stroke="#c9ced3" stroke-width="1"/>
<text x="922" y="845.2" font-size="10.5" fill="#5d6670" text-anchor="end" font-family="Liberation Sans">100</text>
<line x1="926" y1="804.6" x2="1396" y2="804.6" stroke="#e2e9f0" stroke-width="1"/>
<line x1="926" y1="804.6" x2="931.3" y2="804.6" stroke="#c9ced3" stroke-width="1"/>
<text x="922" y="808.3" font-size="10.5" fill="#5d6670" text-anchor="end" font-family="Liberation Sans">150</text>
<line x1="926" y1="767.7" x2="1396" y2="767.7" stroke="#e2e9f0" stroke-width="1"/>
<line x1="926" y1="767.7" x2="931.3" y2="767.7" stroke="#c9ced3" stroke-width="1"/>
<text x="922" y="771.4" font-size="10.5" fill="#5d6670" text-anchor="end" font-family="Liberation Sans">200</text>
<line x1="926" y1="730.8" x2="1396" y2="730.8" stroke="#e2e9f0" stroke-width="1"/>
<line x1="926" y1="730.8" x2="931.3" y2="730.8" stroke="#c9ced3" stroke-width="1"/>
<text x="922" y="734.5" font-size="10.5" fill="#5d6670" text-anchor="end" font-family="Liberation Sans">250</text>
<line x1="931.3" y1="915.4" x2="931.3" y2="920.4" stroke="#d3d7db" stroke-width="1"/>
<line x1="958.6" y1="915.4" x2="958.6" y2="920.4" stroke="#d3d7db" stroke-width="1"/>
<line x1="985.9" y1="915.4" x2="985.9" y2="920.4" stroke="#d3d7db" stroke-width="1"/>
<line x1="1013.2" y1="915.4" x2="1013.2" y2="920.4" stroke="#d3d7db" stroke-width="1"/>
<line x1="1040.5" y1="915.4" x2="1040.5" y2="920.4" stroke="#d3d7db" stroke-width="1"/>
<line x1="1067.8" y1="915.4" x2="1067.8" y2="920.4" stroke="#d3d7db" stroke-width="1"/>
<line x1="1095.0" y1="915.4" x2="1095.0" y2="920.4" stroke="#d3d7db" stroke-width="1"/>
<line x1="1122.3" y1="915.4" x2="1122.3" y2="920.4" stroke="#d3d7db" stroke-width="1"/>
<line x1="1149.6" y1="915.4" x2="1149.6" y2="920.4" stroke="#d3d7db" stroke-width="1"/>
<line x1="1176.9" y1="915.4" x2="1176.9" y2="920.4" stroke="#d3d7db" stroke-width="1"/>
<line x1="1204.2" y1="915.4" x2="1204.2" y2="920.4" stroke="#d3d7db" stroke-width="1"/>
<line x1="1231.5" y1="915.4" x2="1231.5" y2="920.4" stroke="#d3d7db" stroke-width="1"/>
<line x1="1258.8" y1="915.4" x2="1258.8" y2="920.4" stroke="#d3d7db" stroke-width="1"/>
<line x1="1286.1" y1="915.4" x2="1286.1" y2="920.4" stroke="#d3d7db" stroke-width="1"/>
<line x1="1313.4" y1="915.4" x2="1313.4" y2="920.4" stroke="#d3d7db" stroke-width="1"/>
<line x1="1340.6" y1="915.4" x2="1340.6" y2="920.4" stroke="#d3d7db" stroke-width="1"/>
<line x1="1367.9" y1="915.4" x2="1367.9" y2="920.4" stroke="#d3d7db" stroke-width="1"/>
<line x1="1395.2" y1="915.4" x2="1395.2" y2="920.4" stroke="#d3d7db" stroke-width="1"/>
<text x="944.4" y="925.5" font-size="10.8" fill="#5d6670" text-anchor="end" dominant-baseline="middle" transform="rotate(-30 944.4 925.5)" font-family="Liberation Sans">2023-04-01</text>
<text x="971.7" y="925.5" font-size="10.8" fill="#5d6670" text-anchor="end" dominant-baseline="middle" transform="rotate(-30 971.7 925.5)" font-family="Liberation Sans">2023-05-01</text>
<text x="999.0" y="925.5" font-size="10.8" fill="#5d6670" text-anchor="end" dominant-baseline="middle" transform="rotate(-30 999.0 925.5)" font-family="Liberation Sans">2023-06-01</text>
<text x="1026.3" y="925.5" font-size="10.8" fill="#5d6670" text-anchor="end" dominant-baseline="middle" transform="rotate(-30 1026.3 925.5)" font-family="Liberation Sans">2023-07-01</text>
<text x="1053.6" y="925.5" font-size="10.8" fill="#5d6670" text-anchor="end" dominant-baseline="middle" transform="rotate(-30 1053.6 925.5)" font-family="Liberation Sans">2023-08-01</text>
<text x="1080.9" y="925.5" font-size="10.8" fill="#5d6670" text-anchor="end" dominant-baseline="middle" transform="rotate(-30 1080.9 925.5)" font-family="Liberation Sans">2023-09-01</text>
<text x="1108.2" y="925.5" font-size="10.8" fill="#5d6670" text-anchor="end" dominant-baseline="middle" transform="rotate(-30 1108.2 925.5)" font-family="Liberation Sans">2023-10-01</text>
<text x="1135.5" y="925.5" font-size="10.8" fill="#5d6670" text-anchor="end" dominant-baseline="middle" transform="rotate(-30 1135.5 925.5)" font-family="Liberation Sans">2023-11-01</text>
<text x="1162.8" y="925.5" font-size="10.8" fill="#5d6670" text-anchor="end" dominant-baseline="middle" transform="rotate(-30 1162.8 925.5)" font-family="Liberation Sans">2023-12-01</text>
<text x="1190.1" y="925.5" font-size="10.8" fill="#5d6670" text-anchor="end" dominant-baseline="middle" transform="rotate(-30 1190.1 925.5)" font-family="Liberation Sans">2024-01-01</text>
<text x="1217.3" y="925.5" font-size="10.8" fill="#5d6670" text-anchor="end" dominant-baseline="middle" transform="rotate(-30 1217.3 925.5)" font-family="Liberation Sans">2024-02-01</text>
<text x="1244.6" y="925.5" font-size="10.8" fill="#5d6670" text-anchor="end" dominant-baseline="middle" transform="rotate(-30 1244.6 925.5)" font-family="Liberation Sans">2024-03-01</text>
<text x="1271.9" y="925.5" font-size="10.8" fill="#5d6670" text-anchor="end" dominant-baseline="middle" transform="rotate(-30 1271.9 925.5)" font-family="Liberation Sans">2024-04-01</text>
<text x="1299.2" y="925.5" font-size="10.8" fill="#5d6670" text-anchor="end" dominant-baseline="middle" transform="rotate(-30 1299.2 925.5)" font-family="Liberation Sans">2024-05-01</text>
<text x="1326.5" y="925.5" font-size="10.8" fill="#5d6670" text-anchor="end" dominant-baseline="middle" transform="rotate(-30 1326.5 925.5)" font-family="Liberation Sans">2024-06-01</text>
<text x="1353.8" y="925.5" font-size="10.8" fill="#5d6670" text-anchor="end" dominant-baseline="middle" transform="rotate(-30 1353.8 925.5)" font-family="Liberation Sans">2024-07-01</text>
<text x="1381.1" y="925.5" font-size="10.8" fill="#5d6670" text-anchor="end" dominant-baseline="middle" transform="rotate(-30 1381.1 925.5)" font-family="Liberation Sans">2024-08-01</text>
<rect x="935.0" y="914.0" width="9.0" height="1.5" fill="#33557f"/>
<path d="M962.29 915.4 L962.29 882.50 A4.5 4.5 0 0 1 971.29 882.50 L971.29 915.4 Z" fill="url(#gnav)"/>
<path d="M989.58 915.4 L989.58 834.10 A4.5 4.5 0 0 1 998.58 834.10 L998.58 915.4 Z" fill="url(#gnav)"/>
<path d="M1016.87 915.4 L1016.87 883.30 A4.5 4.5 0 0 1 1025.87 883.30 L1025.87 915.4 Z" fill="url(#gnav)"/>
<path d="M1044.16 915.4 L1044.16 890.50 A4.5 4.5 0 0 1 1053.16 890.50 L1053.16 915.4 Z" fill="url(#gnav)"/>
<path d="M1071.45 915.4 L1071.45 867.80 A4.5 4.5 0 0 1 1080.45 867.80 L1080.45 915.4 Z" fill="url(#gnav)"/>
<path d="M1098.74 915.4 L1098.74 839.40 A4.5 4.5 0 0 1 1107.74 839.40 L1107.74 915.4 Z" fill="url(#gnav)"/>
<path d="M1126.03 915.4 L1126.03 821.00 A4.5 4.5 0 0 1 1135.03 821.00 L1135.03 915.4 Z" fill="url(#gnav)"/>
<path d="M1153.32 915.4 L1153.32 898.70 A4.5 4.5 0 0 1 1162.32 898.70 L1162.32 915.4 Z" fill="url(#gnav)"/>
<path d="M1164.22 915.4 L1164.22 830.10 A4.5 4.5 0 0 1 1173.22 830.10 L1173.22 915.4 Z" fill="url(#gor)"/>
<path d="M1191.51 915.4 L1191.51 821.10 A4.5 4.5 0 0 1 1200.51 821.10 L1200.51 915.4 Z" fill="url(#gor)"/>
<path d="M1218.80 915.4 L1218.80 811.40 A4.5 4.5 0 0 1 1227.80 811.40 L1227.80 915.4 Z" fill="url(#gor)"/>
<path d="M1246.09 915.4 L1246.09 802.00 A4.5 4.5 0 0 1 1255.09 802.00 L1255.09 915.4 Z" fill="url(#gor)"/>
<path d="M1273.38 915.4 L1273.38 806.20 A4.5 4.5 0 0 1 1282.38 806.20 L1282.38 915.4 Z" fill="url(#gor)"/>
<path d="M1300.67 915.4 L1300.67 769.70 A4.5 4.5 0 0 1 1309.67 769.70 L1309.67 915.4 Z" fill="url(#gor)"/>
<path d="M1327.96 915.4 L1327.96 738.00 A4.5 4.5 0 0 1 1336.96 738.00 L1336.96 915.4 Z" fill="url(#gor)"/>
<path d="M1355.25 915.4 L1355.25 772.10 A4.5 4.5 0 0 1 1364.25 772.10 L1364.25 915.4 Z" fill="url(#gor)"/>
<path d="M1382.54 915.4 L1382.54 778.70 A4.5 4.5 0 0 1 1391.54 778.70 L1391.54 915.4 Z" fill="url(#gor)"/>
<polyline points="1163.3,824.3 1190.6,815.1 1217.8,805.8 1245.1,796.6 1272.4,801.3 1299.7,767.4 1327.0,733.5 1354.3,766.7 1381.6,773.8" fill="none" stroke="#27a34a" stroke-width="2.3" stroke-linejoin="miter"/>
<rect x="909.5" y="990" width="27" height="14" rx="3" fill="url(#lnav)"/>
<text x="942.5" y="1001.8" font-size="13" fill="#3b4753" font-family="Liberation Sans">Orders</text>
<line x1="1005.5" y1="997.5" x2="1033" y2="997.5" stroke="#27a246" stroke-width="2"/><circle cx="1019.3" cy="997.5" r="5.6" fill="#fff" stroke="#27a246" stroke-width="2.2"/>
<text x="1039.4" y="1001.8" font-size="13" fill="#3b4753" font-family="Liberation Sans">Statistic</text>
<line x1="1107.8" y1="997.5" x2="1135.3" y2="997.5" stroke="#f0672e" stroke-width="2"/><circle cx="1121.6" cy="997.5" r="5.6" fill="#fff" stroke="#f0672e" stroke-width="2.2"/>
<text x="1141.5" y="1001.8" font-size="13" fill="#3b4753" font-family="Liberation Sans">Promotion</text>
<rect x="1223" y="990" width="27" height="14" rx="3" fill="url(#lred)"/>
<text x="1256.5" y="1001.8" font-size="13" fill="#3b4753" font-family="Liberation Sans">Override</text>
<rect x="1329" y="990" width="27" height="14" rx="3" fill="url(#lor)"/>
<text x="1362" y="1001.8" font-size="13" fill="#3b4753" font-family="Liberation Sans">Final</text>
</svg>
</body></html>
